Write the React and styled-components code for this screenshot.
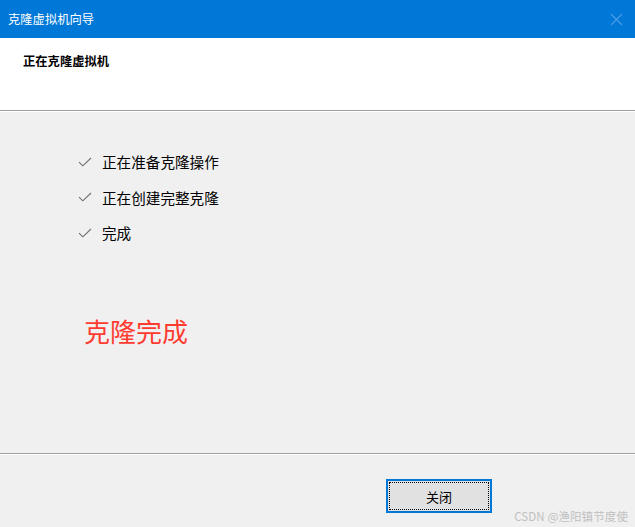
import React from 'react';
import styled, { createGlobalStyle } from 'styled-components';

const GlobalStyle = createGlobalStyle`
  html, body {
    margin: 0;
    padding: 0;
    background: #f0f0f0;
  }
  body {
    font-family: "Noto Sans CJK SC", "Noto Sans", sans-serif;
  }
`

const Window = styled.div`
  position: relative;
  width: 635px;
  height: 527px;
  display: flex;
  flex-direction: column;
  background: #f0f0f0;
  overflow: hidden;
`

const TitleBar = styled.div`
  height: 38px;
  flex-shrink: 0;
  background: #0078d7;
  display: flex;
  align-items: center;
  justify-content: space-between;
  padding: 0 12px 0 8px;
  color: #fff;
  font-size: 12.3px;
`

const CloseIcon = styled.svg`
  width: 13px;
  height: 13px;
  margin-top: 1px;
`

const Header = styled.div`
  height: 73px;
  flex-shrink: 0;
  box-sizing: border-box;
  background: #fff;
  padding: 14px 23px 0;
  border-bottom: 1px solid #a0a0a0;
`

const Heading = styled.div`
  font-size: 12.3px;
  font-weight: 700;
  line-height: 18px;
  color: #000;
`

const HeaderEdge = styled.div`
  height: 1px;
  background: #fff;
  flex-shrink: 0;
`

const Body = styled.div`
  flex: 1;
  display: flex;
  flex-direction: column;
  padding: 32px 0 0 78px;
  border-bottom: 1px solid #a0a0a0;
`

const StepList = styled.ul`
  list-style: none;
  margin: 0;
  padding: 0;
`

const Step = styled.li`
  height: 35.5px;
  display: flex;
  align-items: center;
  gap: 10px;
  font-size: 14.6px;
  color: #000;
`

const Check = styled.svg`
  width: 14px;
  height: 10px;
  flex-shrink: 0;
`

const Result = styled.div`
  margin: 63px 0 0 6px;
  font-size: 26px;
  line-height: 34px;
  color: #ff3b30;
`

const BodyEdge = styled.div`
  height: 1px;
  background: #fff;
  flex-shrink: 0;
`

const Footer = styled.div`
  height: 72px;
  flex-shrink: 0;
  display: flex;
  justify-content: flex-end;
  align-items: flex-start;
  padding: 24px 143px 0 0;
  box-sizing: border-box;
`

const Button = styled.button`
  position: relative;
  width: 106px;
  height: 34px;
  background: #e1e1e1;
  border: 2px solid #0078d7;
  font-family: inherit;
  font-size: 13px;
  color: #000;
  padding: 0;
  cursor: pointer;

  &::after {
    content: '';
    position: absolute;
    inset: 1px;
    border: 1px dotted #000;
  }
`

const Watermark = styled.div`
  position: absolute;
  right: 7px;
  bottom: 3px;
  font-size: 11.5px;
  color: #c0c0c0;
  letter-spacing: 0.1px;
`

const steps = ['正在准备克隆操作', '正在创建完整克隆', '完成']

const App = () => (
  <>
    <GlobalStyle />
    <Window>
      <TitleBar>
        <span>克隆虚拟机向导</span>
        <CloseIcon viewBox="0 0 13 13">
          <path d="M1 1L12 12M12 1L1 12" stroke="#4d9de6" strokeWidth="1.1" fill="none" />
        </CloseIcon>
      </TitleBar>
      <Header>
        <Heading>正在克隆虚拟机</Heading>
      </Header>
      <HeaderEdge />
      <Body>
        <StepList>
          {steps.map(s => (
            <Step key={s}>
              <Check viewBox="0 0 14 10">
                <path d="M1 5.2L4.8 8.8L13 1" stroke="#6e6e6e" strokeWidth="1.1" fill="none" />
              </Check>
              {s}
            </Step>
          ))}
        </StepList>
        <Result>克隆完成</Result>
      </Body>
      <BodyEdge />
      <Footer>
        <Button>关闭</Button>
      </Footer>
      <Watermark>CSDN @渔阳镇节度使</Watermark>
    </Window>
  </>
)

export default App;
